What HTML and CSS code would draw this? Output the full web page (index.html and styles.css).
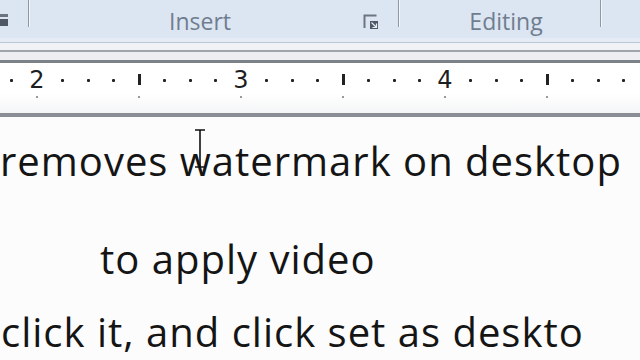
FILE: index.html
```html
<!DOCTYPE html>
<html>
<head>
<meta charset="utf-8">
<link rel="stylesheet" href="styles.css">
</head>
<body>
<div class="ribbon">
  <div class="group g0"><span class="launcher part"></span></div>
  <div class="sep"></div>
  <div class="group g1"><span class="label">Insert</span><span class="launcher"><svg width="16" height="16" viewBox="0 0 16 16"><path d="M1.5 14V1.5h12" fill="none" stroke="#6d7580" stroke-width="2"/><rect x="7" y="7" width="8" height="8" fill="#4f5864"/><path d="M8.5 8.5l5 5M13.5 9.5v4h-4" stroke="#e8eef6" stroke-width="1.2" fill="none"/></svg></span></div>
  <div class="sep"></div>
  <div class="group g2"><span class="label">Editing</span></div>
  <div class="sep"></div>
  <div class="group g3"></div>
</div>
<div class="strip s1"></div>
<div class="strip s2"></div>
<div class="strip s3"></div>
<div class="strip s4"></div>
<div class="strip s5"></div>
<div class="strip s6"></div>
<div class="ruler">
  <div class="marks">
    <span class="c"><i class="dot"></i></span>
    <span class="c"><b class="num">2</b><i class="sub"></i></span>
    <span class="c"><i class="dot"></i></span>
    <span class="c"><i class="dot"></i></span>
    <span class="c"><i class="dot"></i></span>
    <span class="c"><i class="tall"></i><i class="sub"></i></span>
    <span class="c"><i class="dot"></i></span>
    <span class="c"><i class="dot"></i></span>
    <span class="c"><i class="dot"></i></span>
    <span class="c"><b class="num">3</b><i class="sub"></i></span>
    <span class="c"><i class="dot"></i></span>
    <span class="c"><i class="dot"></i></span>
    <span class="c"><i class="dot"></i></span>
    <span class="c"><i class="tall"></i><i class="sub"></i></span>
    <span class="c"><i class="dot"></i></span>
    <span class="c"><i class="dot"></i></span>
    <span class="c"><i class="dot"></i></span>
    <span class="c"><b class="num">4</b><i class="sub"></i></span>
    <span class="c"><i class="dot"></i></span>
    <span class="c"><i class="dot"></i></span>
    <span class="c"><i class="dot"></i></span>
    <span class="c"><i class="tall"></i><i class="sub"></i></span>
    <span class="c"><i class="dot"></i></span>
    <span class="c"><i class="dot"></i></span>
    <span class="c"><i class="dot"></i></span>
  </div>
</div>
<div class="strip s7"></div>
<div class="page">
  <p class="l1">removes watermark on desktop</p>
  <p class="l2">to apply video</p>
  <p class="l3">click it, and click set as deskto</p>
  <svg class="ibeam" width="12" height="40" viewBox="0 0 12 40"><path d="M1 1h10M6 1v37M1 38h10" stroke="#111" stroke-width="1.6" fill="none"/></svg>
</div>
</body>
</html>
```
FILE: styles.css
```css
html, body { margin: 0; padding: 0; }
body { width: 640px; height: 360px; overflow: hidden; background: #fcfcfc; font-family: "Open Sans", sans-serif; }
.ribbon { height: 38px; background: #dce5f2; display: flex; }
.group { position: relative; height: 38px; display: flex; align-items: flex-end; }
.g0 { width: 28px; }
.g1 { width: 368px; justify-content: center; }
.g2 { width: 200px; justify-content: center; }
.g3 { flex: 1; }
.sep { width: 2px; height: 27px; background: linear-gradient(to right, #8f98a5 0 1px, #f3f6fb 1px); }
.label { font-family: "Open Sans", sans-serif; font-size: 23px; color: #6f7d8f; line-height: 26px; padding-bottom: 4px; }
.g1 .label { margin-right: 28px; }
.g2 .label { margin-left: 12px; }
.launcher { position: absolute; right: 19px; top: 13px; width: 16px; height: 16px; }
.launcher.part { left: -7px; top: 14px; width: 15px; height: 12px; background: linear-gradient(#6a7380 0 3px, transparent 3px 5px, #4f5864 5px); }
.strip { height: 1px; }
.s1 { height: 4px; background: #e5ecf6; }
.s2 { height: 1px; background: #b9c7d9; }
.s3 { height: 7px; background: #f0f2f6; }
.s4 { height: 2px; background: #a0a4ab; }
.s5 { height: 8px; background: #eceef1; }
.s6 { height: 3px; background: #7c8087; }
.ruler { height: 50px; background: linear-gradient(#ffffff 0 60%, #f4f5f6); overflow: hidden; }
.marks { display: flex; margin-left: -1.25px; }
.c { flex: 0 0 25.5px; height: 50px; position: relative; display: flex; justify-content: center; }
.dot { position: absolute; top: 16px; width: 3px; height: 3px; border-radius: 1px; background: #222; }
.tall { position: absolute; top: 11px; width: 3px; height: 11px; background: #222; }
.num { position: absolute; top: 3px; font-family: "DejaVu Sans", sans-serif; font-weight: normal; font-size: 24px; line-height: 28px; color: #1e1e22; }
.sub { position: absolute; top: 33px; width: 2px; height: 2px; background: #9a9a9a; }
.s7 { height: 4px; background: #8b8f95; }
.page { position: relative; height: 243px; }
.page p { margin: 0; font-size: 40px; letter-spacing: 1px; color: #151515; white-space: nowrap; line-height: 50px; }
.l1 { padding-top: 19px; margin-left: -3px; letter-spacing: 0.5px; }
.l2 { padding-top: 48px; padding-left: 100px; letter-spacing: 1.8px; }
.l3 { padding-top: 23px; padding-left: 1px; letter-spacing: 1.1px; }
.ibeam { position: absolute; left: 194px; top: 12px; }
```
